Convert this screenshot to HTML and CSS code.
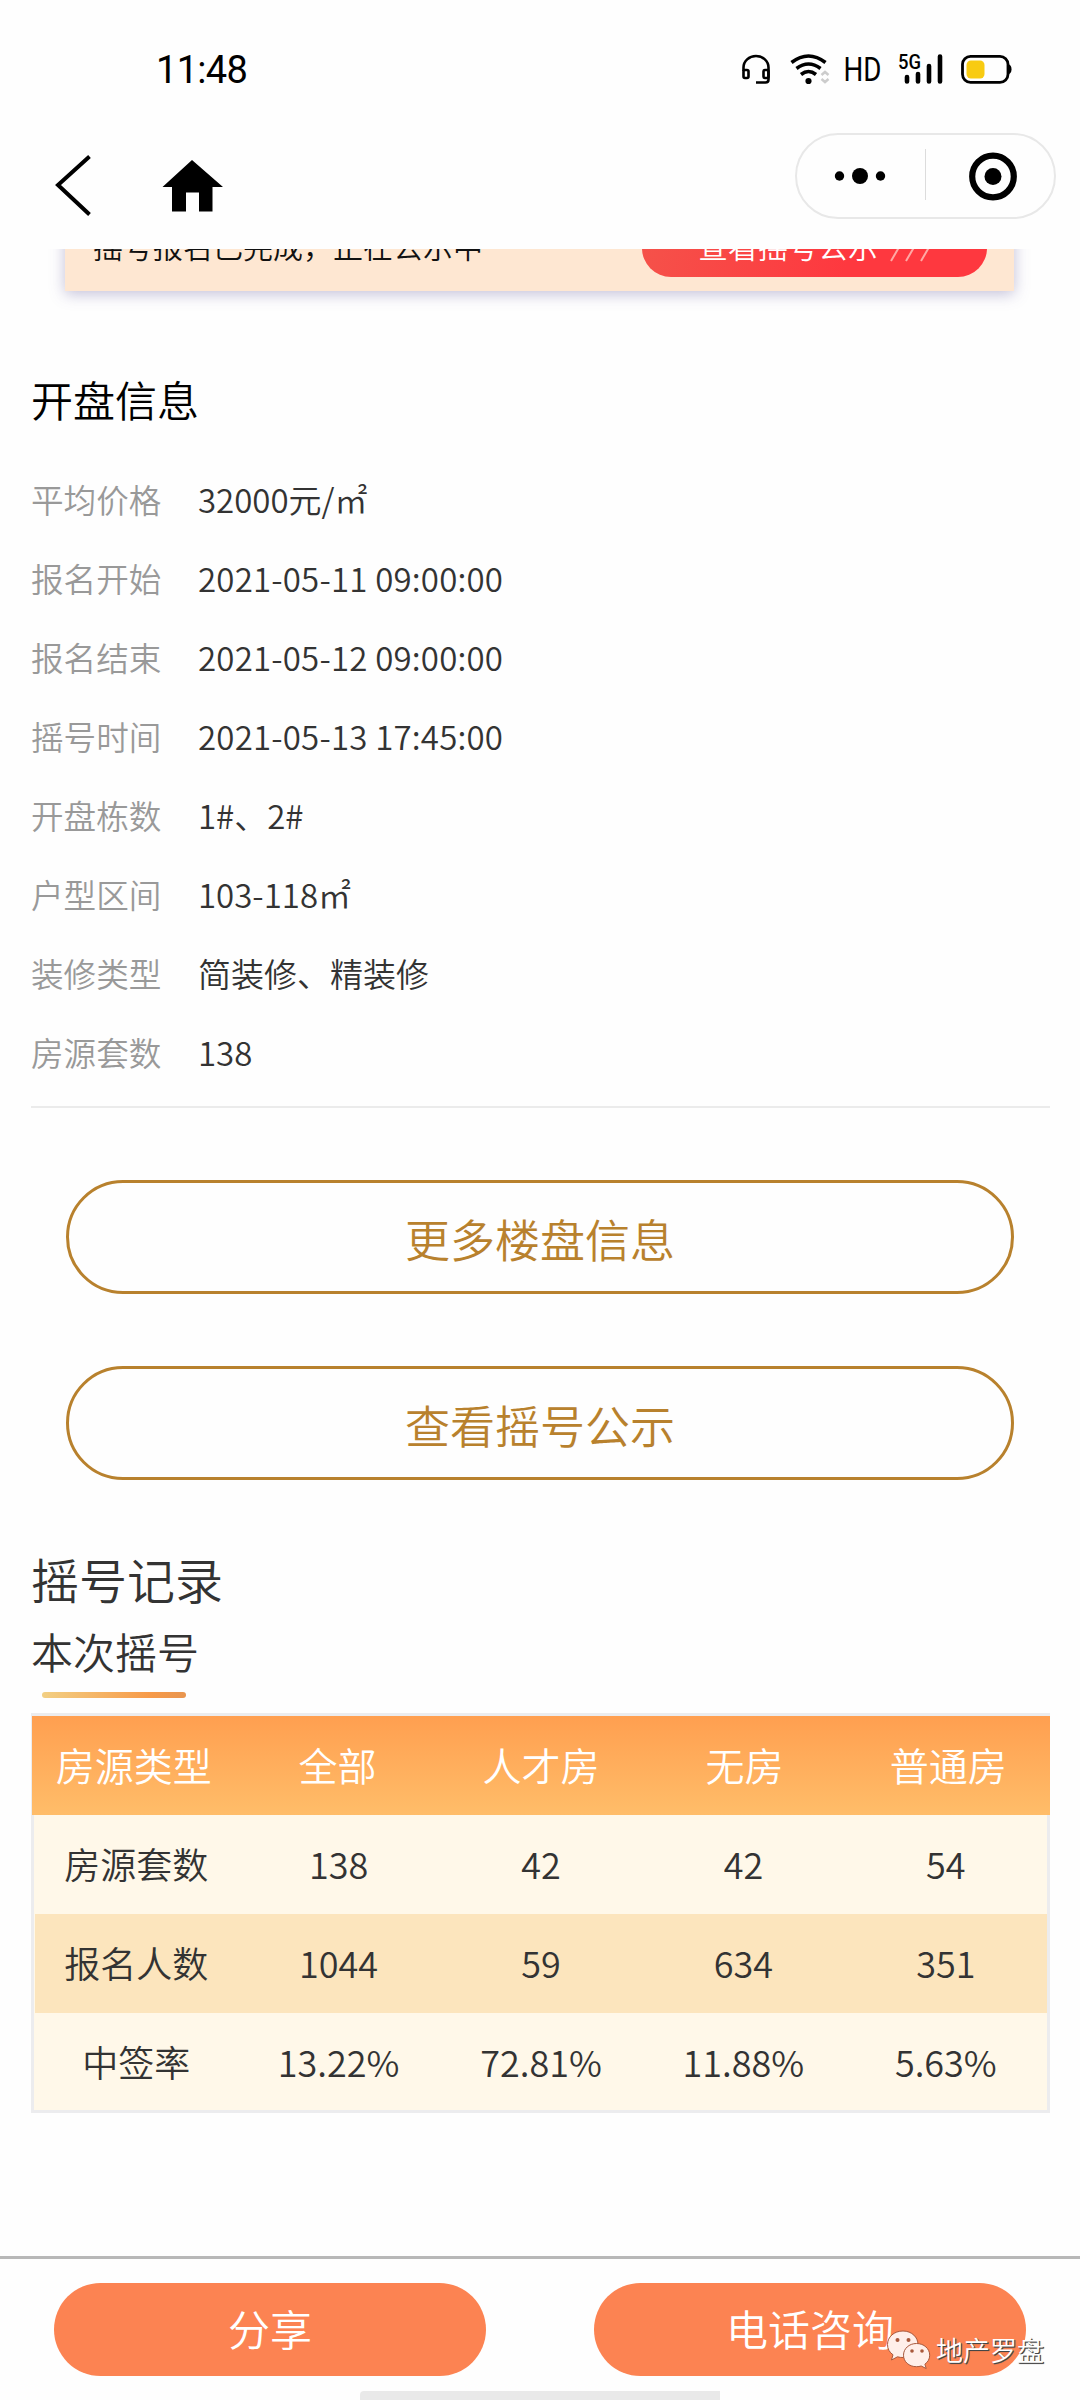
FILE: index.html
```html
<!DOCTYPE html>
<html lang="zh-CN">

<head>
    <meta charset="UTF-8">
    <meta name="viewport" content="width=device-width, initial-scale=1.0">
    <title>开盘信息</title>
    <link rel="stylesheet" href="styles.css">
</head>

<body>
    <div class="page">
        <header class="top">
            <div class="status">
                <span class="status-time">11:48</span>
                <svg class="status-icons" width="280" height="40" viewBox="0 0 280 40">
                    <!-- headset -->
                    <g fill="none" stroke="#000" stroke-width="2.6">
                        <path d="M12.500 26V22.500a12.500 11.500 0 0 1 25 0V34.500q0 3-3 3H25" />
                        <rect x="12.500" y="25" width="5" height="8" rx="1.500" />
                        <rect x="32.500" y="25" width="5" height="8" rx="1.500" />
                    </g>
                    <!-- wifi -->
                    <g fill="none" stroke="#000" stroke-width="3.600">
                        <path d="M60.500 17.500Q77.500 4.500 94.500 17.500" />
                        <path d="M65.500 23.500Q77.500 14.500 89.500 23.500" />
                        <path d="M70 29.500Q77.500 23.500 85 29.500" />
                    </g>
                    <circle cx="77.500" cy="36" r="3.100" />
                    <path d="M90.500 30l3.500-3 3.500 3M90.500 34l3.500 3 3.500-3" fill="none" stroke="#ccc" stroke-width="2.500" />
                    <text x="112.500" y="36" class="status-hd" textLength="38" lengthAdjust="spacingAndGlyphs">HD</text>
                    <text x="167" y="24" class="status-5g" textLength="23" lengthAdjust="spacingAndGlyphs">5G</text>
                    <!-- signal -->
                    <path d="M176 32v4.500M187 29v7.500M198 21v15.500M209 11.500v25" fill="none" stroke="#000" stroke-width="4.600" stroke-linecap="round" />
                    <!-- battery -->
                    <rect x="231.500" y="11.300" width="45.500" height="26" rx="8" fill="none" stroke="#000" stroke-width="2.800" />
                    <path d="M277 19q3.500 1 3.500 5.300t-3.500 5.300z" />
                    <rect x="235.500" y="15.500" width="18" height="18" rx="4.500" fill="#f8cb12" />
                </svg>
            </div>
            <div class="nav">
                <svg width="190" height="66" viewBox="0 0 190 66">
                    <path d="M49.500 4.500L18 33L49.500 62.500" fill="none" stroke="#000" stroke-width="4" />
                    <path d="M152 8L183 35H172.500V59.500H159V40.500H146V59.500H132V35H122.500z" />
                </svg>
                <div class="capsule">
                    <svg width="261" height="86" viewBox="0 0 261 86">
                        <circle cx="44.500" cy="43" r="4.700" />
                        <circle cx="65" cy="43" r="8" />
                        <circle cx="85.500" cy="43" r="4.700" />
                        <path d="M130.500 16v51" stroke="#dcdcdc" />
                        <circle cx="198" cy="43.500" r="20.800" fill="none" stroke="#000" stroke-width="6.200" />
                        <circle cx="198" cy="43.500" r="8.500" />
                    </svg>
                </div>
            </div>
        </header>

        <div class="banner-wrap">
            <div class="banner">
                <span class="banner-text">摇号报名已完成，正在公示中</span>
                <div class="banner-btn">
                    <span>查看摇号公示</span>
                    <svg width="46" height="28" viewBox="0 0 46 28">
                        <path d="M1 27L15 3M16 27L30 3M31 27L45 3" stroke="#ffa8a4" stroke-width="2" />
                    </svg>
                </div>
            </div>
        </div>

        <main class="content">
            <h2 class="title">开盘信息</h2>
            <div class="info">
                <div class="info-row"><span class="info-label">平均价格</span><span>32000元/㎡</span></div>
                <div class="info-row"><span class="info-label">报名开始</span><span class="info-date">2021-05-11 09:00:00</span></div>
                <div class="info-row"><span class="info-label">报名结束</span><span class="info-date">2021-05-12 09:00:00</span></div>
                <div class="info-row"><span class="info-label">摇号时间</span><span class="info-date">2021-05-13 17:45:00</span></div>
                <div class="info-row"><span class="info-label">开盘栋数</span><span>1#、2#</span></div>
                <div class="info-row"><span class="info-label">户型区间</span><span>103-118㎡</span></div>
                <div class="info-row"><span class="info-label">装修类型</span><span>简装修、精装修</span></div>
                <div class="info-row"><span class="info-label">房源套数</span><span>138</span></div>
            </div>

            <div class="links">
                <a class="link-btn">更多楼盘信息</a>
                <a class="link-btn">查看摇号公示</a>
            </div>

            <h2 class="record-title">摇号记录</h2>
            <div class="tab">本次摇号</div>

            <div class="table">
                <div class="tr th">
                    <span>房源类型</span><span>全部</span><span>人才房</span><span>无房</span><span>普通房</span>
                </div>
                <div class="tr">
                    <span>房源套数</span><span>138</span><span>42</span><span>42</span><span>54</span>
                </div>
                <div class="tr even">
                    <span>报名人数</span><span>1044</span><span>59</span><span>634</span><span>351</span>
                </div>
                <div class="tr">
                    <span>中签率</span><span>13.22%</span><span>72.81%</span><span>11.88%</span><span>5.63%</span>
                </div>
            </div>
        </main>

        <footer class="bottom">
            <a class="bottom-btn">分享</a>
            <a class="bottom-btn">电话咨询</a>
            <div class="home-bar"></div>
            <div class="mark">
                <svg width="46" height="42" viewBox="0 0 46 42">
                    <g fill="#ffefea" stroke="#a8583c" stroke-width="1">
                        <path d="M17 2C8 2 1.500 8 1.500 15.500c0 4.500 2 7.800 5.500 10.300L5.500 31l6-3.200c2 .6 3.600.7 5.500.7 9 0 15-6 15-13S26 2 17 2z" />
                        <path d="M30.500 14.500c-7.500 0-13 5.200-13 11.700s5.500 11.500 13 11.500c1.700 0 3.200-.3 4.700-.7l5 2.500-1.300-4.300c3-2.200 4.800-5.200 4.800-9 0-6.500-5.700-11.700-13.200-11.700z" />
                    </g>
                    <g fill="#a8583c">
                        <circle cx="11.500" cy="11" r="2" />
                        <circle cx="22.500" cy="11" r="2" />
                        <circle cx="26" cy="22" r="1.800" />
                        <circle cx="36" cy="22" r="1.800" />
                    </g>
                </svg>
                <span>地产罗盘</span>
            </div>
        </footer>
    </div>
</body>

</html>
```
FILE: styles.css
```css
* {
    box-sizing: border-box;
}

body {
    margin: 0;
    background: #fefefe;
    color: #333;
    font-family: "Noto Sans CJK SC", sans-serif;
    font-weight: 350;
}

.page {
    width: 1080px;
    height: 2400px;
    display: flex;
    flex-direction: column;
    overflow: hidden;
}

/* status bar + mini program nav */
.top {
    height: 249px;
    flex: none;
    background: #fefefe;
}

.status {
    height: 133px;
    padding: 45px 70px 0 156px;
    display: flex;
    justify-content: space-between;
}

.status-time {
    font: 400 38px/50px Roboto, sans-serif;
    letter-spacing: -0.7px;
    color: #000;
}

.status-icons {
    overflow: visible;
    margin-right: -1px;
}

.status-hd {
    font: 400 34px Roboto, sans-serif;
}

.status-5g {
    font: 500 20px Roboto, sans-serif;
}

.nav {
    display: flex;
    justify-content: space-between;
    padding: 0 24px 0 40px;
}

.nav > svg {
    margin-top: 19px;
}

.capsule {
    width: 261px;
    height: 86px;
    border: 2px solid #e8e8e8;
    border-radius: 43px;
}

.capsule svg {
    display: block;
    margin: -2px;
}

/* banner is scrolled half under the nav */
.banner-wrap {
    height: 80px;
    flex: none;
    padding: 0 66px 0 65px;
    overflow: hidden;
}

.banner {
    height: 83px;
    margin-top: -41px;
    padding: 0 27px 0 28px;
    display: flex;
    justify-content: space-between;
    background: #fee7d2;
    box-shadow: 0 3px 14px rgba(90, 80, 150, 0.36);
}

.banner-text {
    font-size: 30px;
    line-height: 75px;
    color: #111;
}

.banner-btn {
    width: 345px;
    height: 58px;
    margin-top: 11px;
    padding-left: 56px;
    display: flex;
    align-items: center;
    border-radius: 29px;
    background: linear-gradient(100deg, #f5524a, #fe383f 60%);
    color: #fff;
    font-size: 30px;
    line-height: 52px;
}

.banner-btn span {
    height: 58px;
}

.banner-btn svg {
    margin-left: 12px;
}

.content {
    flex: 1;
    padding: 0 30px 0 31px;
}

.title {
    margin: 40px 0 30px;
    font-size: 42px;
    font-weight: 350;
    line-height: 60px;
    color: #000;
}

.info {
    height: 649px;
    border-bottom: 2px solid #ebebeb;
}

.info-row {
    height: 79px;
    display: flex;
    align-items: center;
    font-size: 33px;
}

.info-date {
    letter-spacing: 0.2px;
}

.info-label {
    width: 167px;
    color: #999;
    font-size: 32.6px;
}

.links {
    padding: 72px 36px 0 35px;
    display: flex;
    flex-direction: column;
    gap: 72px;
}

.link-btn {
    height: 114px;
    border: 3px solid #b8812d;
    border-radius: 57px;
    color: #b8812d;
    font-size: 45px;
    line-height: 111px;
    text-align: center;
}

.record-title {
    margin: 64px 0 0;
    font-size: 48px;
    font-weight: 350;
    line-height: 68px;
}

.tab {
    width: 200px;
    height: 87px;
    padding-top: 9px;
    font-size: 42px;
    line-height: 60px;
}

.tab::after {
    content: "";
    display: block;
    width: 144px;
    height: 6px;
    margin: 11px 0 0 11px;
    border-radius: 3px;
    background: linear-gradient(90deg, #f2cf83, #f79a49 75%, #e8954f);
}

.table {
    margin-top: 14px;
    padding: 3px 3px 0 4px;
    height: 400px;
    background: #fff8e9;
    box-shadow: inset 0 0 0 3px #ececee;
}

.tr {
    height: 99px;
    display: flex;
    font-size: 36px;
    line-height: 96px;
}

.tr span {
    flex: 1;
    text-align: center;
}

.th {
    margin: 0 -3px 0 -3px;
    background: linear-gradient(#ff9f50, #ffbd69);
    color: #fff;
    font-size: 39px;
}

.even {
    background: #fce5bd;
}

.bottom {
    position: relative;
    height: 144px;
    flex: none;
    padding: 24px 54px 0;
    display: flex;
    justify-content: space-between;
    border-top: 3px solid #b8b8b8;
}

.bottom-btn {
    width: 432px;
    height: 93px;
    border-radius: 47px;
    background: #fc8352;
    color: #fff;
    font-size: 42px;
    line-height: 90px;
    text-align: center;
}

.home-bar {
    position: absolute;
    left: 360px;
    bottom: 0;
    width: 360px;
    height: 9px;
    border-radius: 4px 0 0 0;
    background: #e9e9e9;
}

/* account watermark over the button */
.mark {
    position: absolute;
    left: 886px;
    top: 70px;
    display: flex;
    align-items: center;
    gap: 4px;
    color: #fff;
    font-size: 27px;
    line-height: 40px;
    text-shadow: 1px 1px 1px #444, 1px 1px 0 #555;
}
```
